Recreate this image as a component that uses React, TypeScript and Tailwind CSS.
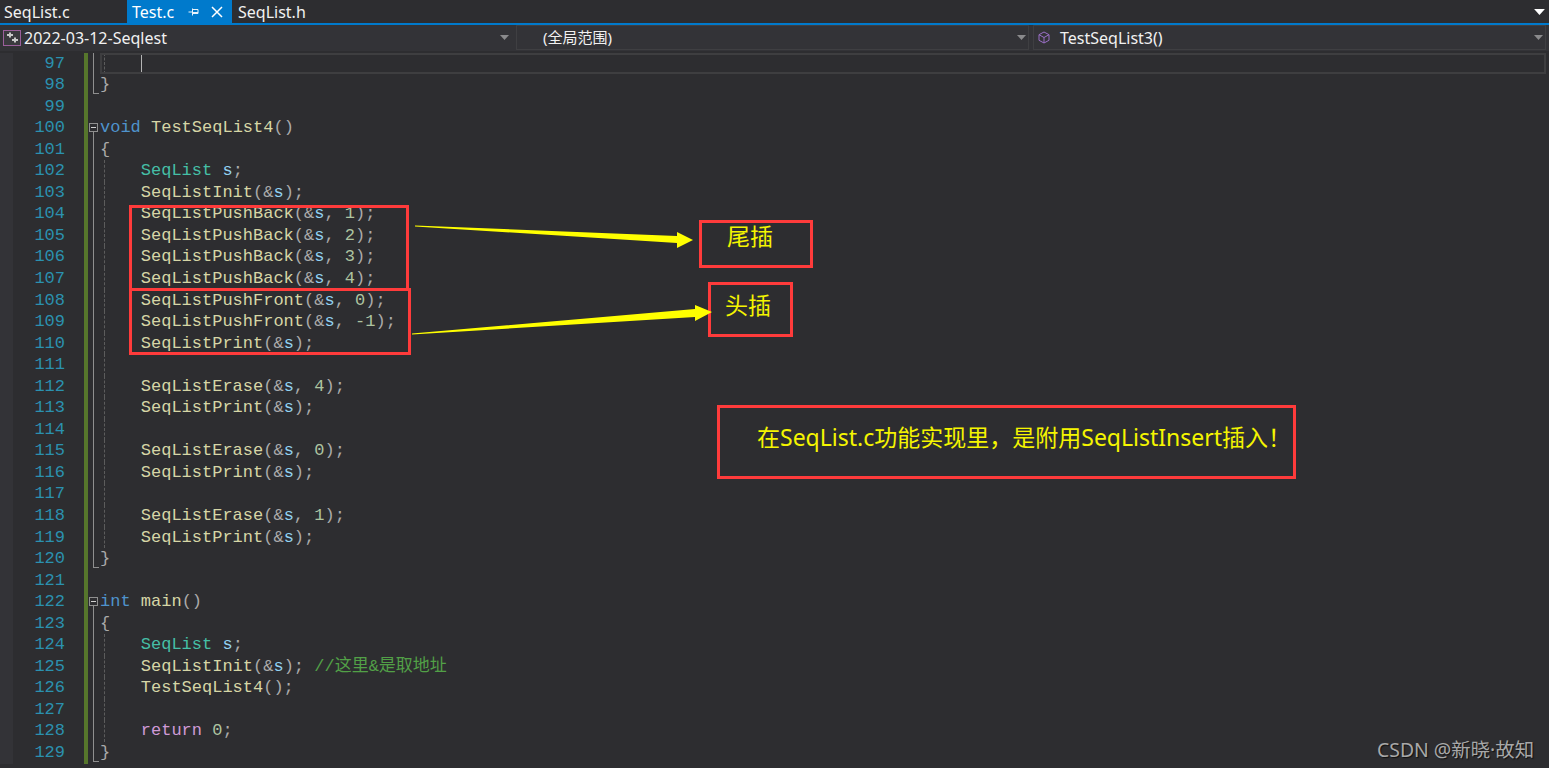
import { ReactNode } from 'react';

type Guide = 'none' | 'box' | 'line' | 'end';
type Part = [string, string];

const fn = 'text-[#d6d6a6]';
const type = 'text-[#45bfa6]';
const kw = 'text-[#4f93cc]';
const ctrl = 'text-[#cf9ad6]';
const varr = 'text-[#92d2f2]';
const num = 'text-[#adc4a0]';
const punc = 'text-[#aaaaaa]';
const comment = 'text-[#52a047]';

const call = (name: string, arg?: string): Part[] => [
  [name, fn],
  ['(&', punc],
  ['s', varr],
  ...(arg ? ([[', ', punc], [arg, num]] as Part[]) : []),
  [');', punc],
];

type Row = { n: number; guide: Guide; dash?: boolean; indent?: boolean; parts?: Part[]; active?: boolean };

const rows: Row[] = [
  { n: 97, guide: 'line', dash: true, active: true },
  { n: 98, guide: 'end', parts: [['}', punc]] },
  { n: 99, guide: 'none' },
  { n: 100, guide: 'box', parts: [['void', kw], [' ', punc], ['TestSeqList4', fn], ['()', punc]] },
  { n: 101, guide: 'line', parts: [['{', punc]] },
  { n: 102, guide: 'line', dash: true, indent: true, parts: [['SeqList', type], [' ', punc], ['s', varr], [';', punc]] },
  { n: 103, guide: 'line', dash: true, indent: true, parts: call('SeqListInit') },
  { n: 104, guide: 'line', dash: true, indent: true, parts: call('SeqListPushBack', '1') },
  { n: 105, guide: 'line', dash: true, indent: true, parts: call('SeqListPushBack', '2') },
  { n: 106, guide: 'line', dash: true, indent: true, parts: call('SeqListPushBack', '3') },
  { n: 107, guide: 'line', dash: true, indent: true, parts: call('SeqListPushBack', '4') },
  { n: 108, guide: 'line', dash: true, indent: true, parts: call('SeqListPushFront', '0') },
  { n: 109, guide: 'line', dash: true, indent: true, parts: call('SeqListPushFront', '-1') },
  { n: 110, guide: 'line', dash: true, indent: true, parts: call('SeqListPrint') },
  { n: 111, guide: 'line', dash: true },
  { n: 112, guide: 'line', dash: true, indent: true, parts: call('SeqListErase', '4') },
  { n: 113, guide: 'line', dash: true, indent: true, parts: call('SeqListPrint') },
  { n: 114, guide: 'line', dash: true },
  { n: 115, guide: 'line', dash: true, indent: true, parts: call('SeqListErase', '0') },
  { n: 116, guide: 'line', dash: true, indent: true, parts: call('SeqListPrint') },
  { n: 117, guide: 'line', dash: true },
  { n: 118, guide: 'line', dash: true, indent: true, parts: call('SeqListErase', '1') },
  { n: 119, guide: 'line', dash: true, indent: true, parts: call('SeqListPrint') },
  { n: 120, guide: 'end', parts: [['}', punc]] },
  { n: 121, guide: 'none' },
  { n: 122, guide: 'box', parts: [['int', kw], [' ', punc], ['main', fn], ['()', punc]] },
  { n: 123, guide: 'line', parts: [['{', punc]] },
  { n: 124, guide: 'line', dash: true, indent: true, parts: [['SeqList', type], [' ', punc], ['s', varr], [';', punc]] },
  {
    n: 125,
    guide: 'line',
    dash: true,
    indent: true,
    parts: [...call('SeqListInit'), [' ', punc], ['//这里&是取地址', comment]],
  },
  { n: 126, guide: 'line', dash: true, indent: true, parts: [['TestSeqList4', fn], ['();', punc]] },
  { n: 127, guide: 'line', dash: true },
  { n: 128, guide: 'line', dash: true, indent: true, parts: [['return', ctrl], [' ', punc], ['0', num], [';', punc]] },
  { n: 129, guide: 'end', parts: [['}', punc]] },
];

const Caret = ({ className }: { className: string }) => (
  <svg width="9" height="5" viewBox="0 0 9 5" className={className}>
    <path d="M0 0h9L4.5 5z" fill="currentColor" />
  </svg>
);

const Combo = ({ className, children }: { className: string; children: ReactNode }) => (
  <div className={`flex h-[25px] items-center border border-[#3f3f42] ${className}`}>
    {children}
    <Caret className="ml-auto mr-[2px] text-[#8a8a8c]" />
  </div>
);

const GuideCell = ({ row }: { row: Row }) => (
  <div className="relative h-full w-[12px] shrink-0">
    {row.guide === 'box' && (
      <div className="absolute left-[1px] top-[6px] flex h-[9px] w-[9px] items-center justify-center border border-[#8f8f8f] bg-[#2d2d30]">
        <div className="h-px w-[5px] bg-[#d0d0d0]" />
      </div>
    )}
    {row.guide === 'box' && <div className="absolute bottom-0 left-[5px] top-[15px] w-px bg-[#8f8f8f]" />}
    {row.guide === 'line' && <div className="absolute inset-y-0 left-[5px] w-px bg-[#8f8f8f]" />}
    {row.guide === 'end' && (
      <div className="absolute left-[5px] top-0 h-[20px] w-[6px] border-b border-l border-[#8f8f8f]" />
    )}
  </div>
);

const CodeRow = ({ row }: { row: Row }) => (
  <div className="flex h-[21.56px] items-center">
    <div className="w-[13px] shrink-0 self-stretch bg-[#333337]" />
    <div className="w-[52px] shrink-0 text-right text-[#2b91af]">{row.n}</div>
    <div className="w-[19px] shrink-0" />
    <div className="h-full w-[4px] shrink-0 bg-[#56762c]" />
    <GuideCell row={row} />
    <div className="relative flex h-full min-w-0 flex-1 items-center whitespace-pre">
      {row.dash && <div className="absolute inset-y-0 left-[4px] border-l border-dashed border-[#5c5c5c]" />}
      {row.active && (
        <div className="absolute inset-y-0 left-0 right-[3px] border-2 border-[#3e3e40]">
          <div className="absolute inset-y-0 left-[39px] w-px bg-[#b4b4b4]" />
        </div>
      )}
      {row.indent && <span className="w-[40.8px] shrink-0" />}
      {row.parts?.map(([text, color], i) => (
        <span key={i} className={color}>
          {text}
        </span>
      ))}
    </div>
  </div>
);

const Tabs = () => (
  <div className="flex h-[23px] bg-[#2d2d30] text-[16px] text-[#f1f1f1]">
    <div className="flex w-[127px] items-center pl-[4px]">SeqList.c</div>
    <div className="flex w-[105px] items-center bg-[#007acc] pl-[5px] text-white">
      Test.c
      <svg width="12" height="12" viewBox="0 0 12 12" className="ml-[14px]" fill="none" stroke="#e8f3fb">
        <path d="M0.5 6h3.5M4.5 2.5v7M4.5 3.5h5.5v4H4.5M4.5 6.5h5.5" />
      </svg>
      <svg width="12" height="12" viewBox="0 0 12 12" className="ml-[11px]" fill="none" stroke="#ffffff" strokeWidth="1.5">
        <path d="M1 1l10 10M11 1L1 11" />
      </svg>
    </div>
    <div className="flex items-center pl-[6px]">SeqList.h</div>
    <Caret className="ml-auto mr-[4px] h-[6px] w-[11px] self-center text-white" />
  </div>
);

const NavBar = () => (
  <div className="flex h-[26px] gap-[4px] bg-[#333337] pr-[3px] text-[16px] text-[#f1f1f1]">
    <Combo className="w-[512px] shrink-0 border-transparent">
      <svg width="18" height="16" viewBox="0 0 18 16" className="ml-[2px] mr-[3px]">
        <rect x="0.5" y="0.5" width="17" height="15" fill="#3a3a3e" stroke="#9b5f9b" />
        <path d="M4 5h6M7 2.5v5M9 10h6M12 7.5v5" stroke="#c8c8c8" strokeWidth="2" />
      </svg>
      2022-03-12-Seqlest
    </Combo>
    <Combo className="w-[513px] shrink-0 pl-[26px]">
      <span className="text-[15px]">(全局范围)</span>
    </Combo>
    <Combo className="flex-1">
      <svg width="12" height="13" viewBox="0 0 12 13" className="ml-[4px] mr-[10px]" fill="none" stroke="#9a6fc6">
        <path d="M6 1l5 2.7v5.6L6 12 1 9.3V3.7zM1 3.7l5 2.8 5-2.8M6 6.5V12" />
      </svg>
      TestSeqList3()
    </Combo>
  </div>
);

const redBox = 'pointer-events-none absolute border-[3px] border-[#ff3b3b]';
const note = 'absolute whitespace-nowrap text-[#f5f500]';

export default function App() {
  return (
    <div
      className="relative h-[768px] w-[1549px] overflow-hidden bg-[#2d2d30]"
      style={{ fontFamily: '"Noto Sans", "Noto Sans CJK SC", sans-serif' }}
    >
      <Tabs />
      <div className="h-[2px] bg-[#007acc]" />
      <NavBar />
      <div
        className="pt-[1.5px] text-[17px] leading-[21.56px]"
        style={{ fontFamily: '"Liberation Mono", "Noto Sans CJK SC", monospace' }}
      >
        {rows.map((row) => (
          <CodeRow key={row.n} row={row} />
        ))}
      </div>

      {/* annotations drawn over the code */}
      <div className={`${redBox} left-[129px] top-[205px] h-[86px] w-[280px]`} />
      <div className={`${redBox} left-[129px] top-[288px] h-[67px] w-[282px]`} />
      <div className={`${redBox} left-[699px] top-[220px] h-[48px] w-[114px]`} />
      <div className={`${redBox} left-[708px] top-[282px] h-[55px] w-[85px]`} />
      <div className={`${redBox} left-[717px] top-[405px] h-[74px] w-[579px]`} />
      <svg className="pointer-events-none absolute left-0 top-0" width="1549" height="768">
        <polygon points="415,225.5 677,236 677,232 693,240 677,248 677,243 415,226.5" fill="#ffff00" />
        <polygon points="412,333.5 695,309 695,305 712,312 695,321 695,317 412,334.5" fill="#ffff00" />
      </svg>
      <div className={`${note} left-[727px] top-[219px] text-[23px]`}>尾插</div>
      <div className={`${note} left-[725px] top-[288px] text-[23px]`}>头插</div>
      <div className={`${note} left-[757px] top-[420px] text-[23px]`}>在SeqList.c功能实现里，是附用SeqListInsert插入！</div>
      <div className="absolute left-[1377px] top-[735px] whitespace-nowrap text-[19.4px] text-[#a8a8a8] [text-shadow:1px_1px_1px_#111]">
        CSDN @新晓·故知
      </div>
    </div>
  );
}
